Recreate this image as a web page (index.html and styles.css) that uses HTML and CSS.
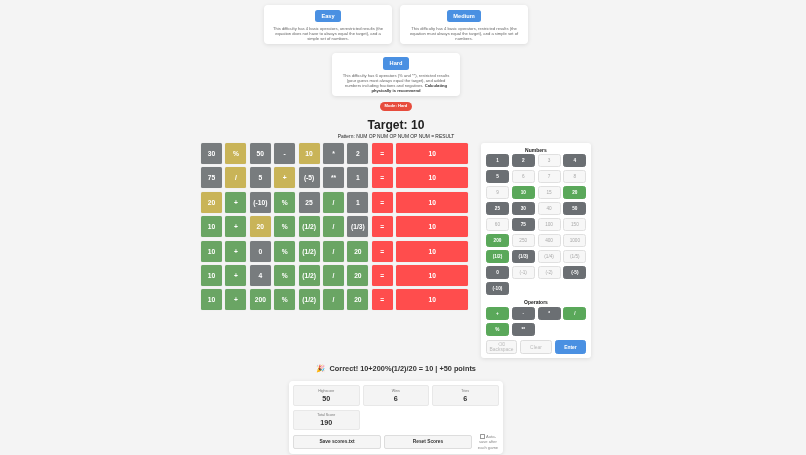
FILE: index.html
```html
<!DOCTYPE html>
<html lang="en">
<head>
<meta charset="utf-8">
<title>Target</title>
<link rel="stylesheet" href="styles.css">
</head>
<body>
<div class="app">
  <div class="modes">
    <div class="card"><button class="mode-btn">Easy</button><p>This difficulty has 4 basic operators, unrestricted results (the equation does not have to always equal the target), and a simple set of numbers.</p></div>
    <div class="card"><button class="mode-btn">Medium</button><p>This difficulty has 4 basic operators, restricted results (the equation must always equal the target), and a simple set of numbers.</p></div>
    <div class="card"><button class="mode-btn">Hard</button><p>This difficulty has 6 operators (% and **), restricted results (your guess must always equal the target), and added numbers including fractions and negatives. <b>Calculating physically is recommend</b></p></div>
  </div>
  <div class="pill">Mode: Hard</div>
  <h1>Target: 10</h1>
  <div class="pattern">Pattern: NUM OP NUM OP NUM OP NUM = RESULT</div>
  <div class="game">
    <div class="board">
      <div class="t a">30</div><div class="t y">%</div><div class="t a">50</div><div class="t a">-</div><div class="t y">10</div><div class="t a">*</div><div class="t a">2</div><div class="t r">=</div><div class="t r">10</div>
      <div class="t a">75</div><div class="t y">/</div><div class="t a">5</div><div class="t y">+</div><div class="t a">(-5)</div><div class="t a">**</div><div class="t a">1</div><div class="t r">=</div><div class="t r">10</div>
      <div class="t y">20</div><div class="t g">+</div><div class="t a">(-10)</div><div class="t g">%</div><div class="t a">25</div><div class="t g">/</div><div class="t a">1</div><div class="t r">=</div><div class="t r">10</div>
      <div class="t g">10</div><div class="t g">+</div><div class="t y">20</div><div class="t g">%</div><div class="t g">(1/2)</div><div class="t g">/</div><div class="t a">(1/3)</div><div class="t r">=</div><div class="t r">10</div>
      <div class="t g">10</div><div class="t g">+</div><div class="t a">0</div><div class="t g">%</div><div class="t g">(1/2)</div><div class="t g">/</div><div class="t g">20</div><div class="t r">=</div><div class="t r">10</div>
      <div class="t g">10</div><div class="t g">+</div><div class="t a">4</div><div class="t g">%</div><div class="t g">(1/2)</div><div class="t g">/</div><div class="t g">20</div><div class="t r">=</div><div class="t r">10</div>
      <div class="t g">10</div><div class="t g">+</div><div class="t g">200</div><div class="t g">%</div><div class="t g">(1/2)</div><div class="t g">/</div><div class="t g">20</div><div class="t r">=</div><div class="t r">10</div>
    </div>
    <div class="keys">
      <h3>Numbers</h3>
      <div class="keygrid">
        <button class="k d">1</button><button class="k d">2</button><button class="k">3</button><button class="k d">4</button>
        <button class="k d">5</button><button class="k">6</button><button class="k">7</button><button class="k">8</button>
        <button class="k">9</button><button class="k c">10</button><button class="k">15</button><button class="k c">20</button>
        <button class="k d">25</button><button class="k d">30</button><button class="k">40</button><button class="k d">50</button>
        <button class="k">60</button><button class="k d">75</button><button class="k">100</button><button class="k">150</button>
        <button class="k c">200</button><button class="k">250</button><button class="k">400</button><button class="k">1000</button>
        <button class="k c">(1/2)</button><button class="k d">(1/3)</button><button class="k">(1/4)</button><button class="k">(1/5)</button>
        <button class="k d">0</button><button class="k">(-1)</button><button class="k">(-2)</button><button class="k d">(-5)</button>
        <button class="k d">(-10)</button>
      </div>
      <h3 class="ops">Operators</h3>
      <div class="keygrid">
        <button class="k c">+</button><button class="k d">-</button><button class="k d">*</button><button class="k c">/</button>
        <button class="k c">%</button><button class="k d">**</button>
      </div>
      <div class="controls">
        <button class="ctl">⌫<br>Backspace</button><button class="ctl">Clear</button><button class="ctl enter">Enter</button>
      </div>
    </div>
  </div>
  <div class="message"><span class="party">🎉</span>Correct! 10+200%(1/2)/20 = 10 | +50 points</div>
  <div class="scores">
    <div class="stats">
      <div class="stat"><span>Highscore</span><b>50</b></div>
      <div class="stat"><span>Wins</span><b>6</b></div>
      <div class="stat"><span>Tries</span><b>6</b></div>
      <div class="stat"><span>Total Score</span><b>190</b></div>
    </div>
    <div class="actions">
      <button class="act">Save scores.txt</button>
      <button class="act">Reset Scores</button>
      <label class="auto"><input type="checkbox">Auto-save after each game</label>
    </div>
  </div>
</div>
</body>
</html>
```

FILE: styles.css
```css
* { box-sizing: border-box; }
html, body { margin: 0; height: 455px; overflow: hidden; }
body { background: #f4f4f4; font-family: "Liberation Sans", Arial, sans-serif; color: #222; }
button { font-family: inherit; margin: 0; cursor: pointer; }
.app { width: 792px; height: 455px; display: flex; flex-direction: column; align-items: center; padding-top: 5px; filter: blur(.35px); }

.modes { width: 280px; display: flex; flex-wrap: wrap; justify-content: center; gap: 9px 8px; }
.card { width: 128px; background: #fff; border-radius: 4px; box-shadow: 0 1px 4px rgba(0,0,0,.1); padding: 4.5px 6.5px 3px; text-align: center; }
.mode-btn { display: block; margin: 0 auto 3.5px; height: 12.5px; padding: 0 6.5px; border: 0; border-radius: 2.5px; background: #4a90e2; color: #fff; font-size: 5.65px; font-weight: 700; }
.card p { margin: 0; font-size: 4.15px; line-height: 5px; color: #666; }
.card p b { color: #333; }

.pill { margin-top: 6px; height: 8.5px; line-height: 8.5px; padding: 0 4.5px; border-radius: 4.5px; background: #e74c3c; color: #fff; font-size: 4.15px; font-weight: 700; }
h1 { margin: 6.5px 0 0; font-size: 12.1px; line-height: 16px; font-weight: 700; color: #222; }
.pattern { margin-top: 1.3px; font-size: 4.9px; line-height: 6px; color: #222; }

.game { margin-top: 2.7px; display: flex; gap: 12.8px; align-items: flex-start; }
.board { display: grid; grid-template-columns: repeat(8, 21px) 72px; grid-auto-rows: 21px; gap: 3.4px; }
.t { display: flex; align-items: center; justify-content: center; border-radius: 1.5px; color: #fff; font-size: 6.7px; font-weight: 700; box-shadow: 0 0 1px rgba(0,0,0,.15); }
.a { background: #787c7e; }
.y { background: #c9b458; }
.g { background: #6aa564; }
.r { background: #ff4d4d; }

.keys { width: 110px; height: 215px; background: #fff; border-radius: 3px; box-shadow: 0 1px 4px rgba(0,0,0,.1); padding: 4px 5px 4px; }
.keys h3 { margin: 0 0 1px; font-size: 5px; line-height: 6px; font-weight: 700; text-align: center; color: #222; }
.keys h3.ops { margin: 4px 0 1.5px; }
.keygrid { display: grid; grid-template-columns: repeat(4, 23px); grid-auto-rows: 13.5px; gap: 2.5px 2.8px; }
.k { padding: 0; border: .7px solid #e0e0e0; border-radius: 2.5px; background: #f7f7f7; color: #aaa; font-size: 4.7px; }
.k.d { background: #6b6f73; border-color: #6b6f73; color: #fff; font-weight: 700; }
.k.c { background: #5aa85a; border-color: #5aa85a; color: #fff; font-weight: 700; }
.controls { display: flex; gap: 3.4px; margin-top: 4px; }
.ctl { width: 31.3px; height: 14px; padding: 0; border: .7px solid #ddd; border-radius: 2.5px; background: #f7f7f7; color: #bbb; font-size: 4.9px; line-height: 5px; }
.enter { background: #4a90e2; border-color: #4a90e2; color: #fff; font-weight: 700; }

.message { margin-top: 6.5px; font-size: 7.35px; line-height: 10px; font-weight: 700; color: #333; font-family: "Liberation Sans", "DejaVu Sans", sans-serif; }
.party { margin-right: 4.5px; }
.scores { margin-top: 7px; width: 214px; height: 73px; background: #fff; border-radius: 4px; box-shadow: 0 1px 4px rgba(0,0,0,.1); padding: 4px; flex: none; }
.stats { display: grid; grid-template-columns: repeat(3, 66.5px); grid-auto-rows: 20.7px; gap: 3.4px 3px; }
.stat { background: #f4f4f4; border: .5px solid #e8e8e8; border-radius: 2px; display: flex; flex-direction: column; align-items: center; justify-content: center; }
.stat span { font-size: 3.6px; line-height: 5px; color: #777; }
.stat b { font-size: 7.2px; line-height: 9px; color: #333; }
.actions { margin-top: 3.8px; display: flex; gap: 3px; align-items: center; }
.act { width: 88px; height: 13.5px; padding: 0; border: .7px solid #ddd; border-radius: 2px; background: #f5f5f5; color: #333; font-size: 4.8px; font-weight: 700; }
.auto { width: 22px; margin-left: 2px; font-size: 4.1px; line-height: 5.3px; text-align: center; color: #888; }
.auto input { appearance: none; width: 4.5px; height: 4.5px; margin: 0 1.5px 0 0; vertical-align: -.5px; background: #fff; border: .5px solid #999; border-radius: .5px; }
```
